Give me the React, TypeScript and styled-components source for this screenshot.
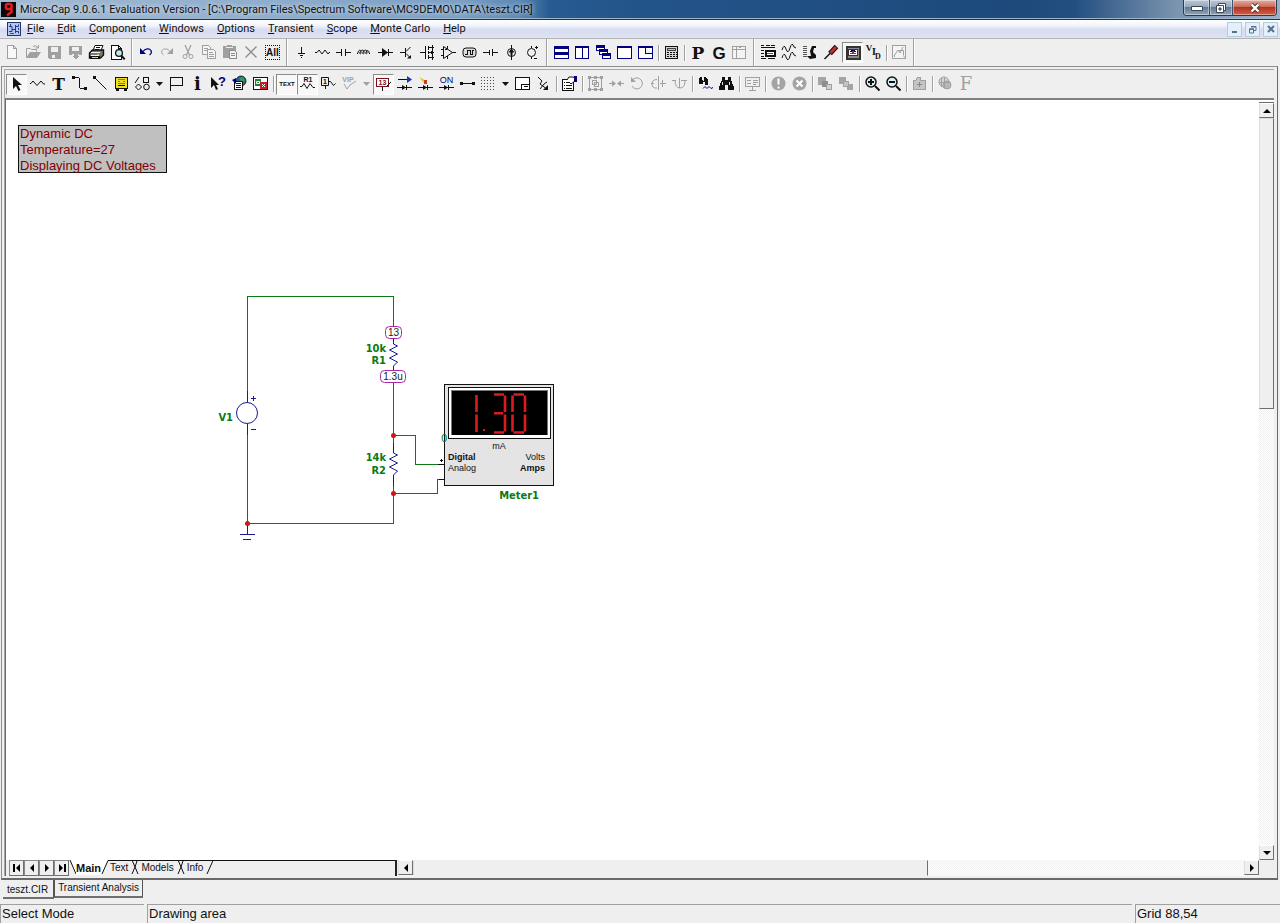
import React from 'react';
import styled, { createGlobalStyle } from 'styled-components';

const K = '#111111';
const G = '#a0a0a0';
const N = '#000080';
const GREEN = '#0a7a14';
const BLUE = '#1a1a90';

const UI = 'Roboto, "Open Sans", sans-serif';
const SANS = '"Liberation Sans", Arial, sans-serif';
const SERIF = '"Liberation Serif", "Times New Roman", serif';
const SLAB = '"DejaVu Serif", "Liberation Serif", serif';
const LABEL = '"DejaVu Sans Condensed", "DejaVu Sans", Verdana, sans-serif';

const GlobalStyle = createGlobalStyle`
  * { box-sizing: border-box; }
  body { margin: 0; background: #efefef; font-family: ${SANS}; font-size: 13px; color: #111; }
  button { margin: 0; padding: 0; border: 0; background: none; font: inherit; color: inherit; }
`;

/* ---------- icon drawing helpers ---------- */

type LineProps = { d: string; c?: string; w?: number; f?: string; soft?: boolean };
const L = ({ d, c = K, w = 1, f = 'none', soft }: LineProps) => (
  <path d={d} stroke={c} strokeWidth={w} fill={f} shapeRendering={soft ? 'auto' : 'crispEdges'} />
);
const F = ({ d, c = K, soft }: { d: string; c?: string; soft?: boolean }) => (
  <path d={d} fill={c} shapeRendering={soft ? 'auto' : 'crispEdges'} />
);
type GlyphProps = { t: string; x?: number; y: number; s: number; c?: string; face?: string; light?: boolean };
const Glyph = ({ t, x = 10, y, s, c = K, face = SANS, light }: GlyphProps) => (
  <text x={x} y={y} fontSize={s} fill={c} textAnchor="middle" fontWeight={light ? 400 : 700} fontFamily={face}>
    {t}
  </text>
);

const disc = <circle cx="10.5" cy="10.5" r="7" fill="#a4a4a4" />;

const ICONS: Record<string, React.ReactNode> = {
  New: <L d="M5.5 3.5h6l3 3v10h-9zM11.5 3.5v3h3" c={G} f="#f8f8f8" />,
  Open: (
    <>
      <L d="M3.5 15.5v-9h4l1 1h5v2M10 4.5q3-2 5 1M15.5 3v3h-3" c={G} soft />
      <F d="M3 16l4-6h11l-4 6z" c={G} soft />
    </>
  ),
  Save: (
    <>
      <F d="M4 4h13v13h-12l-1-1z" c={G} />
      <F d="M7 5h7v5h-7zM8 13h3v3h-3z" c="#efefef" />
    </>
  ),
  'Save As': (
    <>
      <F d="M4 4h13v9h-3v-1h-7v1h-3z" c={G} />
      <F d="M7 5h7v4h-7z" c="#efefef" />
      <F d="M9 12h4v2h2l-4 3-4-3h2z" c={G} />
    </>
  ),
  Print: (
    <>
      <L d="M7 8.5l2-5h8l-2 5z" f="#fff" soft />
      <L d="M10 5.5h4M9 7.5h4" />
      <L d="M3.500 11l3-3h11v5l-3 3h-11z" f="#777" soft w={1.400} />
      <L d="M5 10.500h9M5 13.500h8" c="#f2f2f2" />
      <F d="M4 14h10v3h-10z" />
      <L d="M6 15.500h6" c="#d0d0d0" />
      <F d="M11 12h2v1h-2z" c="#c8c020" />
    </>
  ),
  'Print Preview': (
    <>
      <L d="M4.5 3.5h7l3 3v11h-10zM11.5 3.5v3h3" f="#fff" />
      <circle cx="12" cy="11" r="3.4" fill="#bfe9ec" stroke={K} strokeWidth="1.3" />
      <L d="M14.3 13.5l3.4 3.8" w={2} soft />
    </>
  ),
  Undo: (
    <>
      <F d="M4 6v6h6z" c={N} soft />
      <L d="M7 9.500C9 6.500 13.500 6 15 8.500c1 2 0 3.500-1.500 4.500" c={N} w={1.2} soft />
    </>
  ),
  Redo: (
    <>
      <F d="M16 6v6h-6z" c={G} soft />
      <L d="M13 9.500C11 6.500 6.500 6 5 8.500c-1 2 0 3.500 1.500 4.500" c={G} soft />
    </>
  ),
  Cut: (
    <>
      <L d="M7 3l4.500 10M13 3L8.500 13" c={G} w={1.3} soft />
      <circle cx="7" cy="14.500" r="2" fill="none" stroke={G} />
      <circle cx="13" cy="14.500" r="2" fill="none" stroke={G} />
    </>
  ),
  Copy: (
    <>
      <L d="M3.500 3.500h6l2 2v7h-8zM5 6.500h4M5 8.500h4" c={G} f="#f4f4f4" />
      <L d="M8.500 7.500h6l2 2v7h-8zM10 10.500h4M10 12.500h5M10 14.500h5" c={G} f="#f4f4f4" />
    </>
  ),
  Paste: (
    <>
      <F d="M3 4h4v-1h5v1h4v12h-13z" c={G} />
      <L d="M9.500 8.500h5l2 2v6h-7zM11 11.500h4M11 13.500h4" c="#8c8c8c" f="#f4f4f4" />
      <L d="M6 5.500h7" c="#eee" />
    </>
  ),
  Delete: <L d="M4.500 4.500l11 11M15.500 4.500l-11 11" c="#8c8c8c" w={1.3} soft />,
  'Select All': (
    <>
      <path d="M3 3.500h15M3 17.500h15" stroke={K} strokeDasharray="1 1" shapeRendering="crispEdges" />
      <path d="M3.500 3v15M17.500 3v15" stroke={K} strokeDasharray="1 1" shapeRendering="crispEdges" />
      <Glyph t="All" x={10.5} y={14} s={10} />
    </>
  ),
  Ground: <L d="M10.500 5v6M7 11.500h7M9 13.500h3M10 15.500h1" />,
  Resistor: <L d="M3 10.500h2l2-2.500 3 4 3-4 3 4 1-1.500h1" soft />,
  Capacitor: <L d="M3 10.500h5M8.500 7v7M12.500 7v7M13 10.500h5" />,
  Inductor: <L d="M3 12l1-1c0-3 3-4 3-1s-2 2-1 0 4-3 4 0-2 2-1 0 4-3 4 0-2 2-1 0 3-2 3 1l1 1" soft />,
  Diode: (
    <>
      <L d="M3 10.500h15M13.500 7v7" />
      <F d="M7 6l6 4.500-6 4.500z" soft />
    </>
  ),
  'NPN Transistor': (
    <>
      <L d="M4 10.500h5M9.500 6v9M10 9.500l4.500-4.500M10 11.500l4 4" soft />
      <F d="M15 16.500h-4l4-3.500z" soft />
    </>
  ),
  MOSFET: (
    <>
      <L d="M3 10.500h5M8.500 4v13M11.500 4v4M11.500 9v3M11.500 13v4M12 5.500h5M12 10.500h5M12 15.500h5M15.500 3v15" />
      <F d="M12 10.500l3-2v4z" />
    </>
  ),
  OpAmp: <L d="M5.500 4.500v12l9-6zM3 7.500h3M3 13.500h3M14 10.500h4M9.500 4v3M9.500 14v3M7 7.500h2" soft />,
  'Digital Source': (
    <>
      <rect x="4" y="6" width="13" height="9" rx="3" fill="#dcdcdc" stroke={K} />
      <L d="M6 12.500h2v-4h3v4h2v-4h2" />
    </>
  ),
  Battery: <L d="M3 10.500h6M9.500 8v5M12.500 7v7M13 10.500h5" />,
  'Current Source': (
    <>
      <circle cx="10.500" cy="10.500" r="4" fill="none" stroke={K} />
      <F d="M10.500 6.500l3 4h-2v3h-2v-3h-2z" soft />
      <L d="M10.500 3v15" />
    </>
  ),
  'Voltage Source': (
    <>
      <circle cx="9.500" cy="10.500" r="4" fill="none" stroke={K} />
      <L d="M9.500 4v2M9.500 15v2M13 5.500h3M14.500 4v3M12 16.500h3" />
    </>
  ),
  'Tile Horizontal': (
    <>
      <L d="M3.500 4.500h14v12h-14z" c={N} f="#fff" />
      <F d="M3 4h15v3h-15zM3 10h15v3h-15z" c={N} />
    </>
  ),
  'Tile Vertical': (
    <>
      <L d="M3.500 4.500h13v12h-13zM10.500 4v13" c={N} f="#fff" />
      <F d="M3 4h14v2h-14z" c={N} />
    </>
  ),
  Cascade: (
    <>
      <L d="M3.500 3.500h8v5h-8z" c={N} f="#fff" />
      <F d="M3 3h9v3h-9z" c={N} />
      <L d="M6.500 7.500h8v5h-8z" c={N} f="#fff" />
      <F d="M6 7h9v3h-9z" c={N} />
      <L d="M9.500 11.500h8v5h-8z" c={N} f="#fff" />
      <F d="M9 11h9v3h-9z" c={N} />
    </>
  ),
  Maximize: (
    <>
      <L d="M3.500 4.500h14v12h-14z" c={N} f="#fff" />
      <F d="M3 4h15v2h-15z" c={N} />
    </>
  ),
  'Overlap Windows': (
    <>
      <L d="M3.500 4.500h14v12h-14zM10.500 6v5h7" c={N} f="#fff" />
      <F d="M3 4h15v2h-15z" c={N} />
    </>
  ),
  Calculator: (
    <>
      <L d="M4.500 4.500h12v12h-12z" f="#d8d8d0" />
      <L d="M6.500 6.500h8v2h-8z" c="#444" f="#b8c4b0" />
      <path d="M6 10.500h10M6 12.500h10M6 14.500h10" stroke={K} strokeDasharray="2 1" shapeRendering="crispEdges" />
    </>
  ),
  'Component Panel': <Glyph t="P" x={11} y={17} s={17} face={SLAB} />,
  Graph: <Glyph t="G" x={11} y={17} s={17} />,
  'Text Area': <L d="M3.500 4.500h13v12h-13zM3.500 7.500h13M7.500 4.500v12M10 5.500h2" c={G} f="#f4f4f4" />,
  'Analysis Limits': (
    <>
      <L d="M3 3.500h3M8 3.500h4M13 3.500h4M3 5.500h14M3 8.500h3M3 11.500h3M3 14.500h3" />
      <L d="M7.500 8.500h9v5h-9z" f="#fff" w={2} />
      <L d="M9 11.500h6" c="#555" />
      <L d="M3 16.500h5M10 16.500h7" />
    </>
  ),
  'Analysis Waves': <L d="M3 8q2-7 4-1t4-1 4-1l2 1M3 16q2-7 4-1t4-1 4-1l2 1" soft />,
  Stepping: (
    <>
      <L d="M3 4.500h4M3 6.500h4M3 8.500h4M3 10.500h4M3 12.500h4M3 14.500h4" c="#555" />
      <F d="M10 9l2-5h4v2h-2l-1 4 3 3v3l-6 1-3-3h4z" soft />
    </>
  ),
  'Optimize Probe': (
    <>
      <L d="M3.500 17l6-6" w={1.5} soft />
      <L d="M9 11.500l6.500-7" c={K} w={5} soft />
      <L d="M9.500 11l5.500-6" c="#c03030" w={3} soft />
    </>
  ),
  'DC Display': (
    <>
      <L d="M4.500 4.500h13v12h-13z" w={2} c="#333" f="#8a8a8a" />
      <L d="M6.500 7.500h9v6h-9z" c="#333" f="#fff" />
      <L d="M8 11.500h2l1-2 1 2h2" c="#c02020" />
      <L d="M8 9.500h1l1-1h2l1 1h1" c={N} />
    </>
  ),
  'Voltage Current Display': (
    <>
      <Glyph t="V" x={6} y={9} s={9} face={SERIF} />
      <Glyph t="I" x={11} y={13} s={10} face={SERIF} />
      <Glyph t="D" x={15} y={17} s={8} face={SERIF} />
    </>
  ),
  'Plot Preview': (
    <>
      <L d="M3.500 3.500h13v13h-13z" c={G} f="#f4f4f4" />
      <L d="M5 14l4-6 2 3 3-6M5.500 15v-2M9.500 8.500h5v5M14.500 14l2 2" c={G} soft />
    </>
  ),
  'Select Mode': <F d="M7 4v12l3-3 2.500 5 2-1-2.500-5h4z" soft />,
  'Component Mode': <L d="M3 10.500h1l2-2.500 4 4.500 4-4.500 2.500 3h1.500" soft />,
  'Text Mode': <Glyph t="T" x={10.5} y={17} s={17} face={SLAB} />,
  'Wire Mode': (
    <>
      <L d="M4 4.500h6M10.500 5v10M11 15.500h5" />
      <F d="M3 3h3v3h-3zM15 14h3v3h-3z" />
    </>
  ),
  'Diagonal Wire Mode': (
    <>
      <L d="M4.500 4.500l12 12" soft />
      <F d="M3 3h3v3h-3z" />
    </>
  ),
  Bus: (
    <>
      <L d="M4.500 4.500h12v11h-12z" f="#f0e020" />
      <L d="M7 6.500h7M7 8.500h2M12 8.500h2M7 10.500h7" c="#8a7d10" />
      <F d="M5 15h3v3h-3zM13 15h3v3h-3zM7 12h7v1h-7z" />
    </>
  ),
  'Graphics Mode': (
    <>
      <L d="M3 10l4-6M6.500 11l3 3-3 3-3-3z" soft />
      <circle cx="14.500" cy="14" r="2.800" fill="none" stroke={K} />
      <L d="M11.500 4.500h5v5h-5z" />
    </>
  ),
  'Flag Mode': <L d="M4.500 18v-14M4 4.500h12v8h-12" />,
  'Info Mode': <Glyph t="i" x={10.5} y={17} s={18} face={SLAB} />,
  'Help Mode': (
    <>
      <F d="M3 4v11l3-3 2 5 2-1-2-4h3z" soft />
      <Glyph t="?" x={14} y={13} s={13} c={N} />
    </>
  ),
  'File Link': (
    <>
      <circle cx="12" cy="8" r="5" fill="#1b64a8" stroke={K} strokeWidth="0.800" />
      <F d="M10 5l4-1 2 4-3 2z" c="#3d9a45" soft />
      <L d="M5.500 8.500h8v8h-8zM7 10.500h5M7 12.500h5M7 14.500h5" f="#fff" />
      <F d="M3 7l4-2v6z" c={N} soft />
    </>
  ),
  'Region Enable': (
    <>
      <L d="M3.500 4.500h14v12h-14z" f="#fff" />
      <F d="M5 6h6v7h-6z" c="#17803a" />
      <F d="M10 9h7v7h-7z" c="#cc1c28" />
      <L d="M12 11l3 3M15 11l-3 3M6.500 8.500h3v2h-3z" c="#fff" soft />
    </>
  ),
  'Grid Text': <Glyph t="TEXT" x={11} y={13} s={6} />,
  'Attribute Text': (
    <>
      <Glyph t="R1" x={11} y={9} s={7} />
      <L d="M3 13.500h2l2-3 3 5 3-5 3 4h2" soft />
    </>
  ),
  'Node Numbers': (
    <>
      <L d="M3.500 4.500h7v8h-7zM7.500 12v4M10.500 8.500h2l3 4 2-2" soft />
      <Glyph t="1" x={7} y={11} s={7} />
    </>
  ),
  'Node Voltages': (
    <>
      <Glyph t="VIP" x={9} y={9} s={7} c={G} />
      <L d="M5 11l3 5 3-4 6-4" c={G} soft />
    </>
  ),
  'Show Voltages': (
    <>
      <L d="M3.500 5.500h12v8h-12z" c="#7a1020" f="#fff" />
      <Glyph t="13" x={9.5} y={12} s={7} c="#7a1020" />
      <L d="M9.500 14v4M14 13l4-4" soft />
    </>
  ),
  Currents: (
    <>
      <L d="M4 6.500h10" c={N} />
      <F d="M13 3l5 3.500-5 3.500z" c="#1a35b8" soft />
      <L d="M3 14.500h15M12.500 12v5" />
      <F d="M8 12l4 2.500-4 2.500z" soft />
    </>
  ),
  Power: (
    <>
      <F d="M4 4l6 3 2 4-4-2z" c="#f0c818" soft />
      <F d="M9 7h3v4h-3z" c="#c84020" />
      <L d="M3 14.500h15M12.500 12v5" />
      <F d="M8 12l4 2.500-4 2.500z" soft />
    </>
  ),
  Conditions: (
    <>
      <Glyph t="ON" x={10.5} y={10} s={9} c={N} light />
      <L d="M3 14.500h15M12.500 12v5" />
      <F d="M8 12l4 2.500-4 2.500z" soft />
    </>
  ),
  'Pin Connections': (
    <>
      <L d="M4 10.500h12" />
      <F d="M3 9h3v3h-3zM15 9h3v3h-3z" />
    </>
  ),
  Grid: (
    <path
      d="M3 4.500h15M3 7.500h15M3 10.500h15M3 13.500h15M3 16.500h15"
      stroke="#444"
      strokeDasharray="1 2"
      shapeRendering="crispEdges"
    />
  ),
  Border: <L d="M3.500 4.500h14v12h-14zM9.500 16v-5h8M12 13.500h4" f="#fff" />,
  'Cross-hair': (
    <>
      <L d="M5 4l4 4-2 3 7 5M7 16l4-5 3-2" soft />
      <F d="M15 17h-5l5-5z" soft />
    </>
  ),
  Properties: (
    <>
      <L d="M3.500 6.500h11v11h-11zM5 9.500h1M7 9.500h4M5 12.500h1M7 12.500h6M5 15.500h1M7 15.500h6" f="#fff" />
      <L d="M8 7l2-3h4l2 1v3l-4 3-2-2" f="#fff" soft />
      <F d="M15 3h3v6h-3z" c={N} />
    </>
  ),
  'Select Box': (
    <>
      <L d="M4.500 4.500h12v12h-12z" c={G} />
      <L d="M7.500 7.500h4v4h-4zM9.500 9.500h4v4h-4z" c={G} />
      <F d="M3 3h3v3h-3zM15 3h3v3h-3zM3 15h3v3h-3zM15 15h3v3h-3zM9 3h3v3h-3zM9 15h3v3h-3z" c={G} />
    </>
  ),
  'Mirror Arrows': (
    <>
      <L d="M3 10.500h5M13 10.500h5" c={G} />
      <F d="M10 10.500l-4-3v6zM11 10.500l4-3v6z" c={G} soft />
    </>
  ),
  Rotate: (
    <>
      <L d="M6 6.500a5.500 5.500 0 1 1-1 6.500" c={G} soft />
      <F d="M4 4v5h5z" c={G} soft />
    </>
  ),
  'Flip X': <L d="M10.500 3v14M9 6.500q-5 0-5 4.500t5 4M3 10.500h3M12 10.500h6M14.500 7v7" c={G} soft />,
  'Flip Y': <L d="M3 7.500h4M12 7.500h6M6 7q0 8 5 8t5-7M10.500 5v10" c={G} soft />,
  Find: (
    <>
      <F d="M5 4h2v2l1 2h1v-4h2l2 3v5h-3v-3h-2v2h-4v-4z" />
      <L d="M8 15.500l2-2 2 2 2-2 2 2 2-1" c={N} soft />
    </>
  ),
  'Find Component': (
    <>
      <F d="M6 4h3v3h3v-3h3v3l3 7v3h-6v-5h-3v5h-6v-3l3-7z" />
      <L d="M6.500 9v3M13.500 9v3" c="#ddd" />
    </>
  ),
  'Info Page': (
    <L d="M3.500 4.500h14v9h-14zM10.500 14v3M7 17.500h7M5 7.500h4M5 10.500h4M11 7.500h5M11 9.500h5M11 11.500h3" c={G} />
  ),
  Error: (
    <>
      {disc}
      <L d="M10.500 5.500v6M10.500 13.500v2" c="#fff" w={2} soft />
    </>
  ),
  Stop: (
    <>
      {disc}
      <L d="M7.500 7.500l6 6M13.500 7.500l-6 6" c="#fff" w={2} soft />
    </>
  ),
  'Bring to Front': (
    <>
      <F d="M3 4h8v8h-8z" c="#a4a4a4" />
      <F d="M7 8h6v6h-6z" c="#8e8e8e" />
      <L d="M11.500 11.500h5v5h-5z" c={G} f="#d0d0d0" />
    </>
  ),
  'Send to Back': (
    <>
      <F d="M3 4h7v7h-7zM11 11h6v6h-6z" c="#a4a4a4" />
      <L d="M7.500 8.500h5v5h-5z" c={G} f="#c4c4c4" />
    </>
  ),
  'Zoom In': (
    <>
      <circle cx="9" cy="9" r="5" fill="#d5f0f2" stroke={K} strokeWidth="1.500" />
      <L d="M9 6v6M6 9h6" w={2} />
      <L d="M13 13l4.500 4.500" w={2} soft />
    </>
  ),
  'Zoom Out': (
    <>
      <circle cx="9" cy="9" r="5" fill="#d5f0f2" stroke={K} strokeWidth="1.500" />
      <L d="M6 9h6" w={2} />
      <L d="M13 13l4.500 4.500" w={2} soft />
    </>
  ),
  'Copy Picture': (
    <>
      <L d="M4.500 7.500h2l2-3h3v3h5v9h-12z" c={G} f="#c4c4c4" />
      <L d="M10.500 9v5M8 11.500h5" c="#888" />
    </>
  ),
  Color: (
    <>
      <circle cx="9" cy="9" r="5" fill="#d4d4d4" stroke={G} />
      <circle cx="12" cy="12" r="4" fill="#b8b8b8" stroke={G} />
      <L d="M4 9.500h10M9.500 4v11M6.500 5v9" c={G} />
    </>
  ),
  Font: <Glyph t="F" x={10} y={17} s={18} c={G} face={SLAB} light />,
};

/* ---------- toolbars ---------- */

const ToolRow = styled.div<{ $height: number; $inset: number }>`
  display: flex;
  align-items: center;
  height: ${(p) => p.$height}px;
  padding-left: ${(p) => p.$inset}px;
  overflow: hidden;
`;

const ToolButton = styled.button<{ $pressed?: boolean }>`
  flex: none;
  display: flex;
  justify-content: center;
  align-items: center;
  width: 21px;
  height: 21px;
  border: 1px solid transparent;
  ${(p) =>
    p.$pressed &&
    `border-color: #8c8c8c #fff #fff #8c8c8c;
     background: #f8f8f8;`}
  svg {
    flex: none;
    display: block;
  }
`;

const MenuArrow = styled.button`
  flex: none;
  display: flex;
  justify-content: center;
  align-items: center;
  width: 13px;
  height: 21px;
`;

const Divider = styled.span<{ $tall?: boolean }>`
  flex: none;
  width: ${(p) => (p.$tall ? 8 : 5)}px;
  height: ${(p) => (p.$tall ? 27 : 16)}px;
  background: linear-gradient(90deg, #a0a0a0 1px, #fff 1px, #fff 2px, transparent 2px) no-repeat
    ${(p) => (p.$tall ? 3 : 2)}px 0;
`;

const PRESSED = ['DC Display', 'Select Mode', 'Grid Text', 'Attribute Text', 'Show Voltages'];

const Tool = ({ name }: { name: string }) => (
  <ToolButton type="button" aria-label={name} $pressed={PRESSED.includes(name)}>
    <svg width="20" height="20" viewBox="1 1 20 20" aria-hidden="true">
      {ICONS[name]}
    </svg>
  </ToolButton>
);

/* '|' is a tall divider, '/' a short one, 'v' and 'x' drop arrows (active and greyed) */
const TOOLS_MAIN = [
  'New', 'Open', 'Save', 'Save As', 'Print', 'Print Preview', '|',
  'Undo', 'Redo', 'Cut', 'Copy', 'Paste', 'Delete', 'Select All', '|',
  'Ground', 'Resistor', 'Capacitor', 'Inductor', 'Diode', 'NPN Transistor', 'MOSFET', 'OpAmp',
  'Digital Source', 'Battery', 'Current Source', 'Voltage Source', '|',
  'Tile Horizontal', 'Tile Vertical', 'Cascade', 'Maximize', 'Overlap Windows', '/', 'Calculator', '/',
  'Component Panel', 'Graph', 'Text Area', '|',
  'Analysis Limits', 'Analysis Waves', 'Stepping', 'Optimize Probe', 'DC Display',
  'Voltage Current Display', '/', 'Plot Preview', '|',
];

const TOOLS_EDIT = [
  'Select Mode', 'Component Mode', 'Text Mode', 'Wire Mode', 'Diagonal Wire Mode', 'Bus', 'Graphics Mode', 'v',
  'Flag Mode', 'Info Mode', 'Help Mode', 'File Link', 'Region Enable', '/',
  'Grid Text', 'Attribute Text', 'Node Numbers', 'Node Voltages', 'x',
  'Show Voltages', 'Currents', 'Power', 'Conditions', 'Pin Connections', 'Grid', 'v',
  'Border', 'Cross-hair', '/', 'Properties', '/',
  'Select Box', 'Mirror Arrows', 'Rotate', 'Flip X', 'Flip Y', '/',
  'Find', 'Find Component', '/', 'Info Page', '/', 'Error', 'Stop', '/',
  'Bring to Front', 'Send to Back', '/', 'Zoom In', 'Zoom Out', '/', 'Copy Picture', '/', 'Color', 'Font',
];

const renderTools = (items: string[]) =>
  items.map((item, i) => {
    if (item === '|') return <Divider key={i} $tall />;
    if (item === '/') return <Divider key={i} />;
    if (item === 'v' || item === 'x')
      return (
        <MenuArrow key={i} type="button" aria-label="More">
          <svg width="7" height="4" viewBox="0 0 7 4" aria-hidden="true">
            <path d="M0 0h7l-3.500 4z" fill={item === 'v' ? K : G} />
          </svg>
        </MenuArrow>
      );
    return <Tool key={i} name={item} />;
  });

/* ---------- window chrome ---------- */

const Window = styled.div`
  display: flex;
  flex-direction: column;
  min-height: 100vh;
`;

const TitleBar = styled.header`
  display: flex;
  align-items: flex-start;
  height: 20px;
  border-bottom: 1px solid #17355a;
  box-shadow: inset 0 -1px 0 #9db6d0;
  background: linear-gradient(
    90deg,
    #a3bad2 0,
    #8fadcd 260px,
    #7a9ec4 460px,
    #5c88b4 520px,
    #265b91 550px,
    #235489 50%,
    #1d497b 80%,
    #234f80 84%,
    #7c95af 92%,
    #9ab0c8 100%
  );
`;

const AppIcon = styled.svg`
  flex: none;
  display: block;
  margin: 2px 4px 0 1px;
`;

const Title = styled.h1`
  flex: 1;
  margin: 0;
  font: 400 11px/19px ${UI};
  white-space: nowrap;
  text-shadow: 0 0 5px #fff;
`;

const WindowButtons = styled.div`
  display: flex;
  margin-right: 3px;
  border: 1px solid #2a3b50;
  border-top: 0;
  border-radius: 0 0 4px 4px;
  overflow: hidden;
`;

const WindowButton = styled.button<{ $width: number; $close?: boolean }>`
  display: flex;
  justify-content: center;
  align-items: center;
  width: ${(p) => p.$width}px;
  height: 15px;
  border-right: ${(p) => (p.$close ? 0 : 1)}px solid #3f5068;
  box-shadow: inset 0 0 0 1px rgba(255, 255, 255, 0.4);
  background: ${(p) =>
    p.$close
      ? 'linear-gradient(#e0aea2, #cc6a56 45%, #b23420 50%, #d0604a)'
      : 'linear-gradient(#b9c8d7, #96a9bd 45%, #647a94 50%, #8fa5bc)'};
`;

const MenuBar = styled.nav`
  display: flex;
  align-items: center;
  height: 19px;
  padding: 0 2px 0 7px;
  gap: 13px;
  font: 400 11px/16px ${UI};
  background: linear-gradient(#ffffff 0, #f2f4fb 30%, #d6dcef 55%, #dfe4f3 100%);
  border-bottom: 1px solid #b4b4b4;
`;

const DocIcon = styled.svg`
  flex: none;
  display: block;
  margin-right: -7px;
`;

const MenuItem = styled.button`
  white-space: nowrap;
  span {
    text-decoration: underline;
  }
`;

const DocButtons = styled.div`
  display: flex;
  gap: 3px;
  margin-left: auto;
`;

const DocButton = styled.button`
  display: flex;
  justify-content: center;
  align-items: center;
  width: 15px;
  height: 15px;
  border: 1px solid #b4cbe0;
  background: #e3effa;
`;

const Mdi = styled.main`
  flex: 1;
  display: flex;
  flex-direction: column;
  margin: 0 2px 0 1px;
  padding: 2px 3px 2px 2px;
  border: 1px solid #8f8f8f;
  border-right-color: #6a6a6a;
  border-bottom: 2px solid #6a6a6a;
`;

const MdiClient = styled.div`
  flex: 1;
  display: flex;
  flex-direction: column;
  border-top: 1px solid #a8a8a8;
  border-left: 1px solid #a8a8a8;
`;

const Workspace = styled.div`
  flex: 1;
  display: flex;
  border-top: 2px solid #808080;
  border-left: 1px solid #6a6a6a;
  background: #fff;
`;

const Sheet = styled.section`
  position: relative;
  flex: 1;
  overflow: hidden;
`;

const Note = styled.div`
  position: absolute;
  left: 12px;
  top: 25px;
  width: 149px;
  height: 48px;
  padding-left: 1px;
  border: 1px solid #111;
  background: #c0c0c0;
  color: #840000;
  font-size: 13px;
  line-height: 15px;
  white-space: nowrap;
  p {
    margin: 0;
    height: 16px;
  }
`;

const Drawing = styled.svg`
  display: block;
`;

/* ---------- scroll bars ---------- */

const track = 'repeating-conic-gradient(#fff 0 25%, #f0f0f0 0 50%) 0 0 / 2px 2px';

const VScroll = styled.div`
  flex: none;
  display: flex;
  flex-direction: column;
  width: 15px;
  margin-top: 2px;
  border-top: 1px solid #6a6a6a;
  background: ${track};
`;

const ScrollArrow = styled.button`
  flex: none;
  display: flex;
  justify-content: center;
  align-items: center;
  width: 15px;
  height: 15px;
  border: 1px solid;
  border-color: #fff #6f6f6f #6f6f6f #dcdcdc;
  background: #efefef;
`;

const TrackV = styled.div`
  flex: 1;
`;

const ThumbV = styled.div`
  height: 40%;
  border: 1px solid;
  border-color: #dcdcdc #6f6f6f #6f6f6f #dcdcdc;
  background: #efefef;
`;

const HScroll = styled.div`
  flex: 1;
  display: flex;
  background: ${track};
`;

const TrackH = styled.div`
  flex: 1;
`;

const ThumbH = styled.div`
  width: 62%;
  height: 100%;
  border: 1px solid;
  border-color: #efefef #6f6f6f #efefef #dcdcdc;
  background: #efefef;
`;

const Corner = styled.span`
  flex: none;
  width: 15px;
  background: #efefef;
`;

const ARROWS = {
  up: 'M0 6l4-4 4 4z',
  down: 'M0 2l4 4 4-4z',
  left: 'M6 0l-4 4 4 4z',
  right: 'M2 0l4 4-4 4z',
  first: 'M0 0h2v8h-2zM7 0l-4 4 4 4z',
  last: 'M6 0h2v8h-2zM1 0l4 4-4 4z',
};

const Arrow = ({ dir }: { dir: keyof typeof ARROWS }) => (
  <svg width="8" height="8" viewBox="0 0 8 8" aria-hidden="true">
    <path d={ARROWS[dir]} fill="#000" />
  </svg>
);

/* ---------- page tabs, document tabs, status ---------- */

const BottomRow = styled.div`
  display: flex;
  height: 16px;
  border-left: 1px solid #6a6a6a;
  padding-left: 3px;
`;

const PageTabs = styled.div`
  flex: none;
  display: flex;
  width: 328px;
  border-right: 2px solid #222;
  margin-right: 1px;
  font-size: 10px;
  line-height: 14px;
`;

const PageTab = styled.button<{ $active?: boolean }>`
  height: 15px;
  border-top: 1px solid ${(p) => (p.$active ? '#fff' : '#111')};
  background: ${(p) => (p.$active ? '#fff' : 'none')};
  font-weight: ${(p) => (p.$active ? 700 : 400)};
  font-size: ${(p) => (p.$active ? 11 : 10)}px;
`;

const Slant = styled.svg`
  flex: none;
  display: block;
`;

const TabFill = styled.span`
  flex: 1;
  border-top: 1px solid #111;
`;

const NavButton = styled(ScrollArrow)`
  height: 16px;
  border-color: #8a8a8a #6f6f6f #6f6f6f #8a8a8a;
`;

const DocTabs = styled.div`
  display: flex;
  align-items: flex-start;
  height: 24px;
  padding-left: 3px;
  font-size: 10px;
`;

const DocTab = styled.button<{ $active?: boolean }>`
  height: ${(p) => (p.$active ? 19 : 18)}px;
  padding: ${(p) => (p.$active ? '2px 5px 0 4px' : '0 3px 1px')};
  border-right: 1px solid #555;
  border-bottom: 2px solid #707070;
  border-left: ${(p) => (p.$active ? 0 : 1)}px solid #555;
  line-height: 15px;
  white-space: nowrap;
`;

const StatusBar = styled.footer`
  display: flex;
  gap: 3px;
  height: 19px;
`;

const StatusCell = styled.div<{ $width?: number }>`
  flex: ${(p) => (p.$width ? `0 0 ${p.$width}px` : '1')};
  padding-left: 1px;
  border-top: 1px solid #a0a0a0;
  border-left: 1px solid #a0a0a0;
  line-height: 18px;
  white-space: nowrap;
  overflow: hidden;
`;

/* ---------- circuit drawing ---------- */

const Wire = ({ d, c = GREEN }: { d: string; c?: string }) => (
  <path d={d} fill="none" stroke={c} strokeWidth="1" shapeRendering="crispEdges" />
);

const Zigzag = ({ y }: { y: number }) => (
  <path d={`M393.500 ${y}l4 2-8 4 8 4-8 4 8 4-4 4`} fill="none" stroke={BLUE} strokeWidth="1" />
);

const PartLabel = ({ x, y, children }: { x: number; y: number; children: string }) => (
  <text x={x} y={y} textAnchor="end" fontFamily={LABEL} fontSize="11" fontWeight="bold" fill={GREEN}>
    {children}
  </text>
);

const Reading = ({ x, y, w, children }: { x: number; y: number; w: number; children: string }) => (
  <>
    <rect x={x} y={y} width={w} height="12" rx="4" fill="#fff" stroke="#a828a8" />
    <text x={x + w / 2} y={y + 9.5} textAnchor="middle" fontFamily={SANS} fontSize="10" fill="#222">
      {children}
    </text>
  </>
);

type CaptionProps = { x: number; y: number; a?: 'start' | 'middle' | 'end'; b?: boolean; children: string };
const Caption = ({ x, y, a = 'start', b, children }: CaptionProps) => (
  <text x={x} y={y} textAnchor={a} fontFamily={SANS} fontSize="9" fontWeight={b ? 700 : 400} fill="#111">
    {children}
  </text>
);

const Circuit = () => (
  <Drawing width="600" height="460" viewBox="6 100 600 460" role="img" aria-label="Circuit schematic">
    <Wire d="M247.500 391V296.500H393.500V327M393.500 383V443M393.500 486V523.500H247.500V435" />
    <Wire d="M393.500 435.500H415.500V464.500H438M393.500 493.500H437.500V479.500H440" />
    <Wire d="M438 464.500H445M439 479.500H445" c="#111" />
    <Wire d="M247.500 391V402M247.500 424V435M393.500 339V344M393.500 366V371M393.500 443V453M393.500 475V486" c={BLUE} />
    <Wire d="M247.500 523V534M240 534.500H255M243 539.500H251M251 398.500H256M253.500 396V401M251 429.500H256" c={BLUE} />
    <circle cx="247" cy="413" r="10.500" fill="#fff" stroke={BLUE} />
    <Zigzag y={344} />
    <Zigzag y={453} />
    <Reading x={385.5} y={326.5} w={16}>13</Reading>
    <Reading x={380.5} y={370.5} w={25}>1.3u</Reading>
    <PartLabel x={386} y={352}>10k</PartLabel>
    <PartLabel x={386} y={364}>R1</PartLabel>
    <PartLabel x={386} y={461}>14k</PartLabel>
    <PartLabel x={386} y={474}>R2</PartLabel>
    <PartLabel x={233} y={421}>V1</PartLabel>
    <PartLabel x={539} y={499}>Meter1</PartLabel>
    <g fill="#d01414">
      <circle cx="393.500" cy="435.500" r="2.500" />
      <circle cx="393.500" cy="493.500" r="2.500" />
      <circle cx="247.500" cy="523.500" r="2.500" />
    </g>
    <rect x="444.500" y="384.500" width="109" height="101" fill="#e4e4e4" stroke="#111" shapeRendering="crispEdges" />
    <rect x="448.500" y="387.500" width="102" height="51" fill="#fff" stroke="#111" shapeRendering="crispEdges" />
    <rect x="451" y="390" width="97" height="45" fill="#777" shapeRendering="crispEdges" />
    <rect x="452" y="391" width="95" height="44" fill="#000" shapeRendering="crispEdges" />
    <g stroke="#dc1c1c" strokeWidth="2.600" fill="none">
      <path d="M476.500 395V412M476.500 414.500V432" />
      <path d="M494 394.500H504M494 413.300H503M494 432.500H504M505 395.500V412M505 414.500V431.500" />
      <path d="M512.500 395.500V412M512.500 414.500V431.500M513.500 394.500H524M513.500 432.500H524M525 395.500V412M525 414.500V431.500" />
    </g>
    <rect x="483" y="429" width="2" height="2" fill="#dc1c1c" />
    <Caption x={499} y={449} a="middle">mA</Caption>
    <Caption x={448} y={460} b>Digital</Caption>
    <Caption x={448} y={471}>Analog</Caption>
    <Caption x={545} y={460} a="end">Volts</Caption>
    <Caption x={545} y={471} a="end" b>Amps</Caption>
    <text x="441" y="442" fontFamily={LABEL} fontSize="11" fill={GREEN}>0</text>
    <path d="M440 460.500h3M441.500 459v3" stroke="#111" />
  </Drawing>
);

const MENUS = ['File', 'Edit', 'Component', 'Windows', 'Options', 'Transient', 'Scope', 'Monte Carlo', 'Help'];

const TABS = ['Text', 'Models', 'Info'];

export default function App() {
  return (
    <Window>
      <GlobalStyle />
      <TitleBar>
        <AppIcon width="15" height="15" viewBox="0 0 15 15" aria-hidden="true">
          <rect width="15" height="15" fill="#0a0a0a" />
          <path d="M10 7H6L5 6V3l1-1h3l1.500 1v7L6 13.500" fill="none" stroke="#e81c1c" strokeWidth="2.500" />
        </AppIcon>
        <Title>Micro-Cap 9.0.6.1 Evaluation Version - [C:\Program Files\Spectrum Software\MC9DEMO\DATA\teszt.CIR]</Title>
        <WindowButtons>
          <WindowButton type="button" aria-label="Minimize" $width={26}>
            <svg width="12" height="6" viewBox="0 0 12 6"><path d="M0.500 1.500h11v4h-11z" fill="#fff" stroke="#3a4656" /></svg>
          </WindowButton>
          <WindowButton type="button" aria-label="Restore" $width={23}>
            <svg width="12" height="12" viewBox="0 0 12 12">
              <path d="M3.500 1.500h7v7h-7z" fill="#fff" stroke="#3a4656" />
              <path d="M1.500 3.500h7v7h-7z" fill="#fff" stroke="#3a4656" />
              <path d="M4 6h2v2h-2z" fill="#6f8299" stroke="#3a4656" />
            </svg>
          </WindowButton>
          <WindowButton type="button" aria-label="Close" $width={43} $close>
            <svg width="12" height="10" viewBox="0 0 12 10">
              <path d="M2.500 1.500l7 7M9.500 1.500l-7 7" stroke="#4a2a2a" strokeWidth="4" />
              <path d="M2.500 1.500l7 7M9.500 1.500l-7 7" stroke="#fff" strokeWidth="2.400" />
            </svg>
          </WindowButton>
        </WindowButtons>
      </TitleBar>

      <MenuBar>
        <DocIcon width="14" height="14" viewBox="0 0 14 14" aria-hidden="true">
          <rect x="0.500" y="0.500" width="13" height="13" fill="#b4c6ee" stroke="#26345e" />
          <path
            d="M2 4.500h3v5h-3M5 7.500h3M8.500 3v8M8.500 4.500h3v-2M8.500 9.500h3v2M3.500 2v2M11.500 6v2"
            fill="none"
            stroke="#1d3aa0"
          />
          <path d="M3 11.500h4" stroke="#8a2a5a" />
        </DocIcon>
        {MENUS.map((m) => (
          <MenuItem key={m} type="button"><span>{m[0]}</span>{m.slice(1)}</MenuItem>
        ))}
        <DocButtons>
          <DocButton type="button" aria-label="Minimize document">
            <svg width="7" height="7" viewBox="0 0 7 7"><path d="M1 5h5v2h-5z" fill="#5b7088" /></svg>
          </DocButton>
          <DocButton type="button" aria-label="Restore document">
            <svg width="9" height="9" viewBox="0 0 9 9">
              <path d="M3 1.500h5v4h-2M1.500 4h4v4h-4z" fill="none" stroke="#5b7088" />
              <path d="M3 1h5v1.500h-5zM1 3.500h5v1.500h-5z" fill="#5b7088" />
            </svg>
          </DocButton>
          <DocButton type="button" aria-label="Close document">
            <svg width="8" height="8" viewBox="0 0 8 8"><path d="M1 1l6 6M7 1l-6 6" stroke="#5b7088" strokeWidth="2" /></svg>
          </DocButton>
        </DocButtons>
      </MenuBar>

      <ToolRow $height={27} $inset={2}>{renderTools(TOOLS_MAIN)}</ToolRow>

      <Mdi>
        <MdiClient>
          <ToolRow $height={28} $inset={1}>{renderTools(TOOLS_EDIT)}</ToolRow>
          <Workspace>
            <Sheet>
              <Circuit />
              <Note>
                <p>Dynamic DC</p>
                <p>Temperature=27</p>
                <p>Displaying DC Voltages</p>
              </Note>
            </Sheet>
            <VScroll>
              <ScrollArrow type="button" aria-label="Scroll up"><Arrow dir="up" /></ScrollArrow>
              <TrackV><ThumbV /></TrackV>
              <ScrollArrow type="button" aria-label="Scroll down"><Arrow dir="down" /></ScrollArrow>
            </VScroll>
          </Workspace>
          <BottomRow>
            <NavButton type="button" aria-label="First page"><Arrow dir="first" /></NavButton>
            <NavButton type="button" aria-label="Previous page"><Arrow dir="left" /></NavButton>
            <NavButton type="button" aria-label="Next page"><Arrow dir="right" /></NavButton>
            <NavButton type="button" aria-label="Last page"><Arrow dir="last" /></NavButton>
            <PageTabs>
              <Slant width="7" height="15" viewBox="0 0 7 15">
                <path d="M1 0h6v15z" fill="#fff" />
                <path d="M1 0l6 14" stroke="#111" />
              </Slant>
              <PageTab type="button" $active>Main</PageTab>
              {TABS.map((t, i) =>
                i === 0 ? (
                  <React.Fragment key={t}>
                    <Slant width="9" height="15" viewBox="0 0 9 15">
                      <path d="M0 0h7l-6 14h-1z" fill="#fff" />
                      <path d="M1 14l6-13.500h2" fill="none" stroke="#111" />
                    </Slant>
                    <PageTab type="button">{t}</PageTab>
                  </React.Fragment>
                ) : (
                  <React.Fragment key={t}>
                    <Slant width="13" height="15" viewBox="0 0 13 15">
                      <path d="M0 .5h13M4 0l6 14M4 14l3-7 2-6" fill="none" stroke="#111" />
                    </Slant>
                    <PageTab type="button">{t}</PageTab>
                  </React.Fragment>
                )
              )}
              <Slant width="12" height="15" viewBox="0 0 12 15"><path d="M4 14l6-13.500M0 .5h12" stroke="#111" /></Slant>
              <TabFill />
            </PageTabs>
            <HScroll>
              <ScrollArrow type="button" aria-label="Scroll left"><Arrow dir="left" /></ScrollArrow>
              <TrackH><ThumbH /></TrackH>
              <ScrollArrow type="button" aria-label="Scroll right"><Arrow dir="right" /></ScrollArrow>
            </HScroll>
            <Corner />
          </BottomRow>
        </MdiClient>
      </Mdi>

      <DocTabs>
        <DocTab type="button" $active>teszt.CIR</DocTab>
        <DocTab type="button">Transient Analysis</DocTab>
      </DocTabs>

      <StatusBar>
        <StatusCell $width={144}>Select Mode</StatusCell>
        <StatusCell>Drawing area</StatusCell>
        <StatusCell $width={145}>Grid 88,54</StatusCell>
      </StatusBar>
    </Window>
  );
}
